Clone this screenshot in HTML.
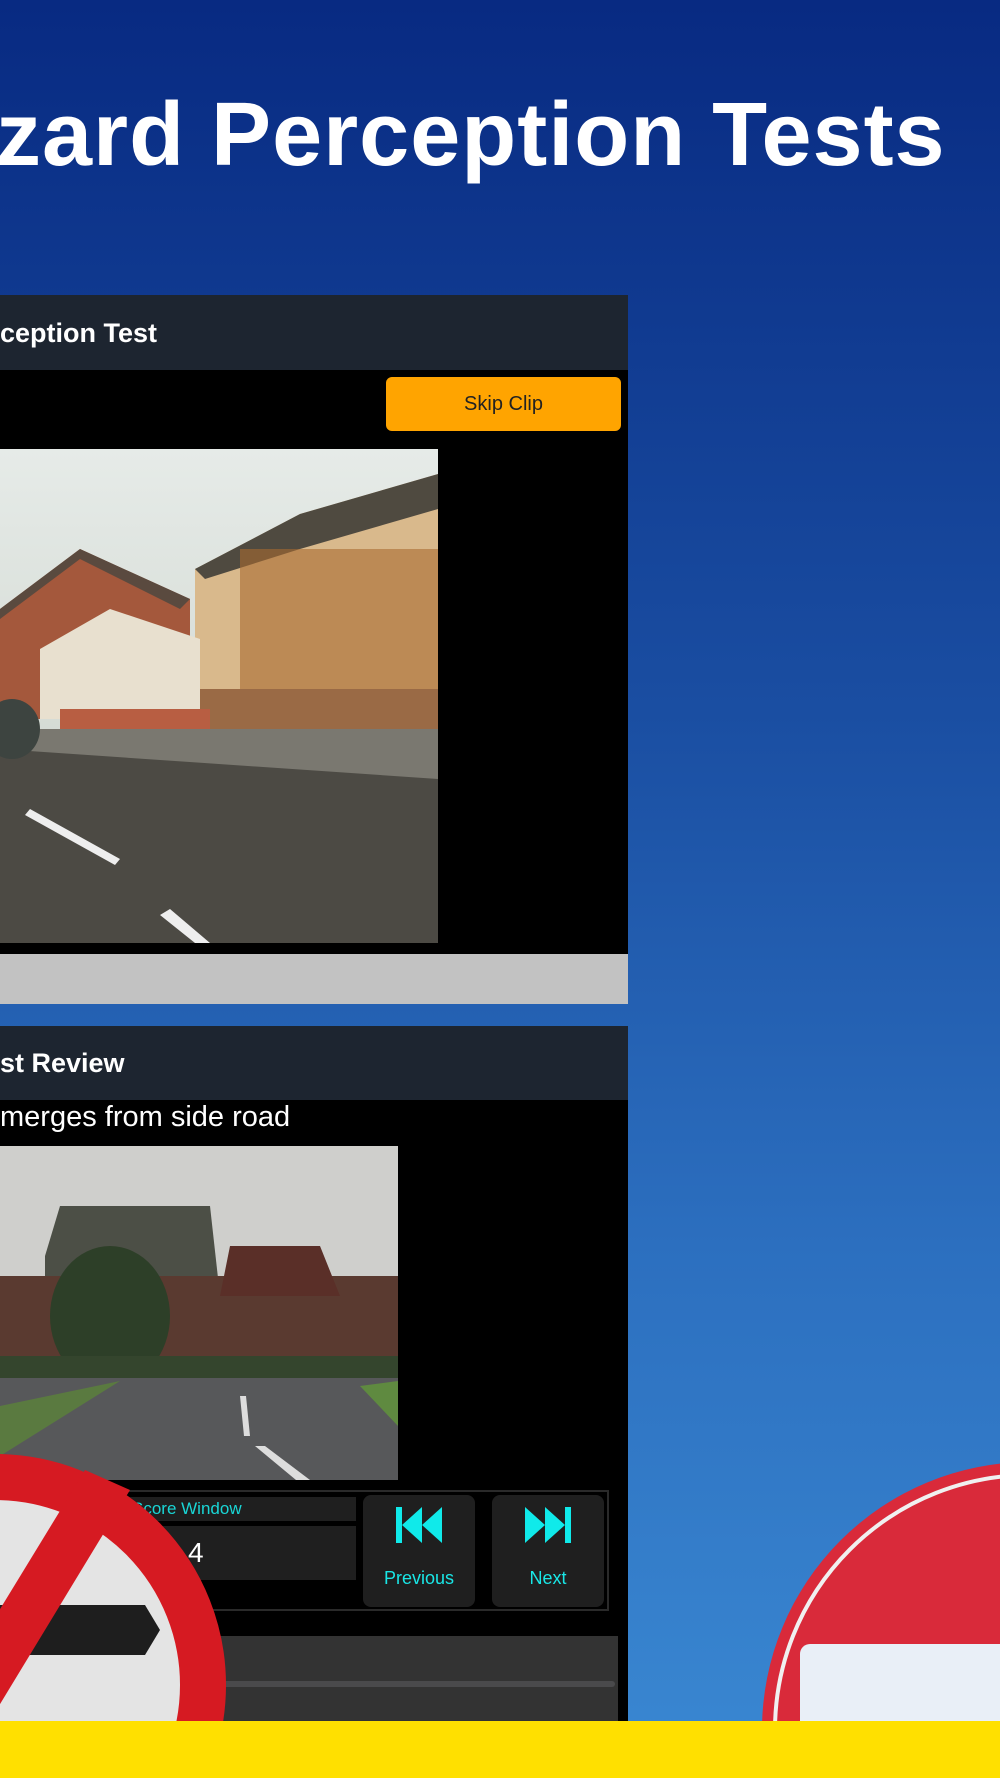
<!DOCTYPE html>
<html><head><meta charset="utf-8"><style>
*{margin:0;padding:0;box-sizing:border-box}
html,body{width:1000px;height:1778px;overflow:hidden}
body{position:relative;font-family:"Liberation Sans",sans-serif;background:linear-gradient(180deg,#082a82 0%,#1a4ea2 40%,#2c6fbf 70%,#3a88d2 100%)}
.abs{position:absolute}
h1{position:absolute;left:-4px;top:84px;font-size:90px;font-weight:bold;color:#fff;letter-spacing:1px;white-space:nowrap}
.hdr{background:#1d2530;color:#fff;font-size:27px;font-weight:bold}
</style></head><body>
<h1>zard Perception Tests</h1>

<div class="abs hdr" style="left:0;top:295px;width:628px;height:75px;"><span class="abs" style="left:0;top:23px">ception Test</span></div>
<div class="abs" style="left:0;top:370px;width:628px;height:584px;background:#000"></div>
<div class="abs" style="left:386px;top:377px;width:235px;height:54px;background:#ffa400;border-radius:6px;text-align:center;line-height:54px;font-size:20px;color:#222">Skip Clip</div>
<svg class="abs" style="left:0;top:449px" width="438" height="494" viewBox="0 0 438 494">
<defs><linearGradient id="s1" x1="0" y1="0" x2="0" y2="1"><stop offset="0" stop-color="#e6ebe8"/><stop offset="1" stop-color="#c8cfc6"/></linearGradient></defs>
<rect width="438" height="494" fill="url(#s1)"/>
<polygon points="195,120 300,65 438,25 438,270 195,270" fill="#d9b98c"/>
<polygon points="195,120 300,65 438,25 438,60 300,100 205,130" fill="#4f4a40"/>
<polygon points="0,160 80,100 190,150 190,270 0,270" fill="#a4583c"/>
<polygon points="0,160 80,100 190,150 180,160 80,110 0,170" fill="#5a4a3f"/>
<polygon points="40,200 110,160 200,190 200,270 40,270" fill="#e8e0cf"/>
<rect x="240" y="100" width="200" height="140" fill="#a86a30" opacity=".6"/>
<rect x="200" y="240" width="238" height="50" fill="#9a6a45"/>
<rect x="60" y="260" width="150" height="30" fill="#b85e42"/>
<rect x="0" y="280" width="438" height="214" fill="#4c4a44"/>
<polygon points="0,280 438,280 438,330 0,300" fill="#7a7870"/>
<polygon points="30,360 120,410 115,416 25,366" fill="#eee"/>
<polygon points="170,460 210,494 195,494 160,466" fill="#eee"/>
<ellipse cx="12" cy="280" rx="28" ry="30" fill="#3d4440"/>
</svg>
<div class="abs" style="left:0;top:954px;width:628px;height:50px;background:#c2c2c2"></div>

<div class="abs hdr" style="left:0;top:1026px;width:628px;height:74px;"><span class="abs" style="left:0;top:22px">st Review</span></div>
<div class="abs" style="left:0;top:1100px;width:628px;height:621px;background:#000"></div>
<div class="abs" style="left:0;top:1101px;font-size:29px;color:#fff">merges from side road</div>
<svg class="abs" style="left:0;top:1146px" width="398" height="334" viewBox="0 0 398 334">
<rect width="398" height="334" fill="#cfcfcc"/>
<polygon points="45,110 60,60 210,60 220,150 45,150" fill="#4c4f46"/>
<rect x="0" y="130" width="398" height="90" fill="#5a3a30"/>
<polygon points="220,150 230,100 320,100 340,150" fill="#5a2f28"/>
<ellipse cx="110" cy="170" rx="60" ry="70" fill="#2d3f28"/>
<rect x="0" y="210" width="398" height="40" fill="#34452d"/>
<rect x="0" y="232" width="398" height="102" fill="#57585a"/>
<polygon points="0,260 120,235 0,310" fill="#5a7a40"/>
<polygon points="360,240 398,235 398,280" fill="#5f8a40"/>
<polygon points="255,300 265,300 310,334 296,334" fill="#ddd"/>
<polygon points="240,250 246,250 250,290 244,290" fill="#ddd"/>
</svg>
<div class="abs" style="left:0;top:1490px;width:609px;height:121px;border:2px solid #2a2a2a"></div>
<div class="abs" style="left:128px;top:1497px;width:228px;height:24px;background:#1f1f1f;color:#19d6d6;font-size:17px;line-height:24px;padding-left:4px">Score Window</div>
<div class="abs" style="left:128px;top:1526px;width:228px;height:54px;background:#1f1f1f;color:#fff;font-size:28px;line-height:54px;padding-left:60px">4</div>
<div class="abs" style="left:363px;top:1495px;width:112px;height:112px;background:#1f1f1f;border-radius:8px;color:#19e6e6;text-align:center;font-size:18px">
<svg style="margin-top:10px" width="50" height="40" viewBox="0 0 50 40"><rect x="2" y="2" width="6" height="36" fill="#10eaea"/><polygon points="28,2 8,20 28,38" fill="#10eaea"/><polygon points="48,2 28,20 48,38" fill="#10eaea"/></svg>
<div style="margin-top:18px">Previous</div></div>
<div class="abs" style="left:492px;top:1495px;width:112px;height:112px;background:#1f1f1f;border-radius:8px;color:#19e6e6;text-align:center;font-size:18px">
<svg style="margin-top:10px" width="50" height="40" viewBox="0 0 50 40"><polygon points="2,2 22,20 2,38" fill="#10eaea"/><polygon points="22,2 42,20 22,38" fill="#10eaea"/><rect x="42" y="2" width="6" height="36" fill="#10eaea"/></svg>
<div style="margin-top:18px">Next</div></div>
<div class="abs" style="left:0;top:1636px;width:618px;height:85px;background:#333"></div>
<div class="abs" style="left:100px;top:1681px;width:515px;height:6px;background:#4a4a4c;border-radius:3px"></div>

<svg class="abs" style="left:0;top:1440px" width="240" height="281" viewBox="0 0 240 281">
<circle cx="-5" cy="245" r="208" fill="#e4e4e4" stroke="#d61a22" stroke-width="46"/>
<polygon points="0,165 145,165 160,190 145,215 0,215" fill="#1e1e1e"/>
<polygon points="85,30 130,50 -40,330 -80,300" fill="#d61a22"/>
</svg>
<svg class="abs" style="left:760px;top:1450px" width="240" height="271" viewBox="0 0 240 271">
<circle cx="270" cy="280" r="268" fill="#d92a3a"/>
<circle cx="270" cy="280" r="255" fill="none" stroke="#f0f0f0" stroke-width="4"/>
<rect x="40" y="194" width="240" height="100" rx="10" fill="#e9eff7"/>
</svg>
<div class="abs" style="left:0;top:1721px;width:1000px;height:57px;background:#ffe000"></div>
</body></html>
